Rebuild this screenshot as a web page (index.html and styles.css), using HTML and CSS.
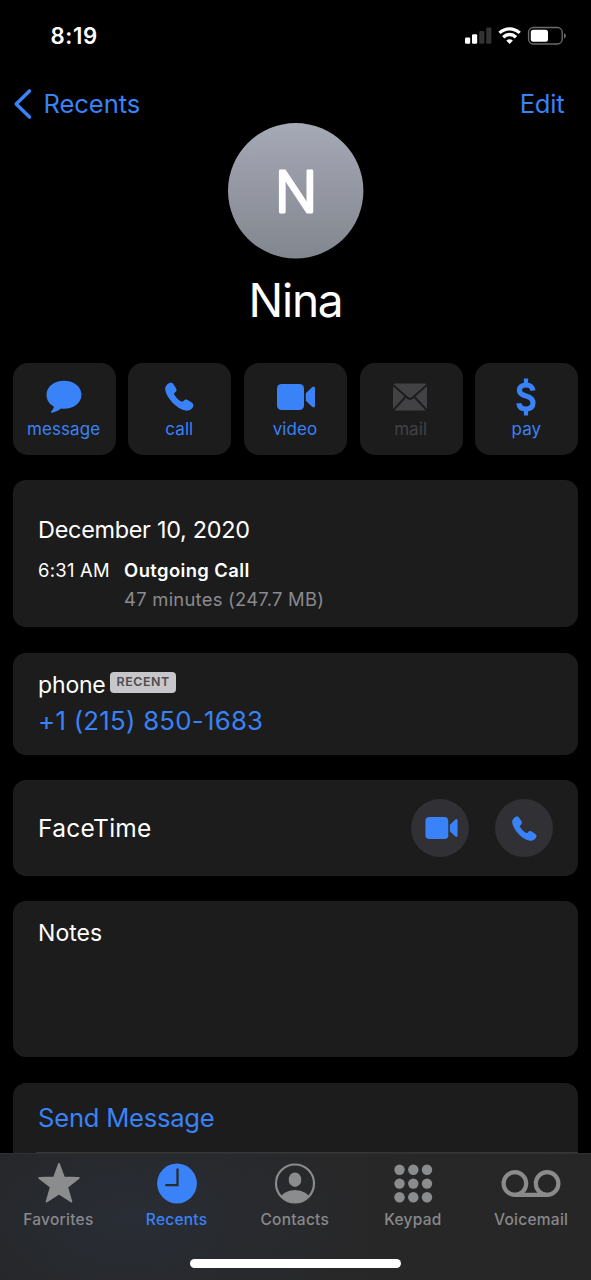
FILE: index.html
```html
<!DOCTYPE html>
<html lang="en">
<head>
<meta charset="utf-8">
<title>Nina</title>
<link rel="stylesheet" href="styles.css">
</head>
<body>
<svg class="defs" width="0" height="0" aria-hidden="true">
  <symbol id="phone" viewBox="0 0 29 29"><path d="M2.2 2.5C4 .3 7.200 0 8.500 2.200L11 6.200C12 8 11.600 9.400 9.900 10.600C8.900 11.300 8.900 12 9.500 13C11 15.600 13.200 17.800 15.800 19.300C16.800 19.900 17.600 19.900 18.300 19C19.600 17.300 21 17 22.700 18L26.700 20.600C28.900 22 29 24.200 27.200 26.200C25.600 28 23.500 28.900 21 28.600C16.500 28 11.500 25 7.300 20.500C3.200 16.100 .6 11.300 .2 7.300C0 5.300 .8 3.800 2.200 2.500Z"/></symbol>
  <symbol id="video" viewBox="0 0 38 26"><rect x="0" y="0" width="27" height="26" rx="4.500"/><path d="M28.800 9.200L34.800 3.500Q38 1 38 4.500V21.500Q38 25 34.800 22.500L28.800 16.800Z"/></symbol>
</svg>
<div class="screen">
  <header class="status">
    <span class="time">8:19</span>
    <svg class="status-icons" width="104" height="20" viewBox="0 0 104 20">
      <g fill="#fff"><rect x="2" y="11.500" width="5.200" height="6.300" rx="1.200"/><rect x="9" y="8.300" width="5.200" height="9.500" rx="1.200"/></g>
      <g fill="#333"><rect x="16.200" y="5" width="5.200" height="12.800" rx="1.200"/><rect x="23.200" y="1.500" width="5.200" height="16.300" rx="1.200"/></g>
      <g fill="none" stroke="#fff" stroke-width="3.300"><path d="M36.500 6.900C42.400 1.400 50.800 1.400 56.700 6.900"/><path d="M40.200 11.200C43.900 7.600 49.300 7.600 53 11.200"/></g>
      <path fill="#fff" d="M46.600 18L43.300 14.600Q46.600 12 49.900 14.600Z"/>
      <rect x="65.600" y="1.500" width="33.600" height="16.500" rx="4.800" fill="none" stroke="#6b6b6b" stroke-width="1.400"/>
      <rect x="67.800" y="3.800" width="17.200" height="12" rx="2.500" fill="#fff"/>
      <path fill="#6b6b6b" d="M101 7.200Q103 8 103 9.800Q103 11.600 101 12.400Z"/>
    </svg>
  </header>
  <nav class="nav">
    <span class="back">
      <svg width="20" height="32" viewBox="0 0 20 32"><path d="M16.500 2.900L3.200 16L16.500 29.100" fill="none" stroke="#3a82f7" stroke-width="3.500" stroke-linecap="round" stroke-linejoin="round"/></svg>
      <span class="back-label">Recents</span>
    </span>
    <span class="edit">Edit</span>
  </nav>
  <section class="profile">
    <svg class="avatar" width="136" height="136" viewBox="0 0 136 136">
      <defs><linearGradient id="av" x1="0" y1="0" x2="0" y2="1"><stop offset="0" stop-color="#a6a9b6"/><stop offset="1" stop-color="#82868e"/></linearGradient></defs>
      <circle cx="67.700" cy="67.800" r="67.700" fill="url(#av)"/>
      <text class="initial" x="68" y="89.400" text-anchor="middle">N</text>
    </svg>
    <h1 class="name">Nina</h1>
  </section>
  <section class="actions">
    <div class="action"><svg width="36" height="34" viewBox="0 0 36 34"><path d="M18 .8C27.800 .8 35.500 6.900 35.500 14.800S27.800 28.800 18 28.800C17 28.800 16 28.700 15.100 28.600C12.500 30.600 9.400 32.200 6.300 32.700C5.100 32.900 4.700 32 5.400 31.200C6.900 29.600 7.800 28.300 7.900 26.600C3.300 24.300 .5 20 .5 14.800C.5 6.900 8.200 .8 18 .8Z"/></svg><span>message</span></div>
    <div class="action"><svg width="29" height="29"><use href="#phone"/></svg><span>call</span></div>
    <div class="action video"><svg width="38" height="26"><use href="#video"/></svg><span>video</span></div>
    <div class="action off"><svg width="34" height="28" viewBox="0 0 34 28"><rect y=".5" width="34" height="27" rx="2.500"/><path d="M0 2L14.200 14.500Q17 17.400 19.800 14.500L34 2M0 27.500L12.500 14M34 27.500L21.500 14" fill="none" stroke="#1c1c1c" stroke-width="1.900"/></svg><span>mail</span></div>
    <div class="action"><svg width="20" height="38" viewBox="0 0 20 38"><path d="M10 .5V7M10 31V37.500" fill="none" stroke="#3a82f7" stroke-width="4.200"/><path d="M17 12.600C16.400 9 14 7 10.200 7C6.200 7 3.400 9 3.400 12.200C3.400 15.700 6 16.900 10 18C14.500 19.200 17 20.800 17 25C17 29 14.300 31 10 31C5.600 31 3.200 28.700 2.800 25.200" fill="none" stroke="#3a82f7" stroke-width="5.200"/></svg><span>pay</span></div>
  </section>
  <section class="card log">
    <div class="date">December 10, 2020</div>
    <div class="entry">
      <span class="at">6:31 AM</span>
      <div><div class="kind">Outgoing Call</div><div class="detail">47 minutes (247.7 MB)</div></div>
    </div>
  </section>
  <section class="card number">
    <div class="label"><span class="phone-label">phone</span><span class="badge">RECENT</span></div>
    <div class="tel">+1 (215) 850-1683</div>
  </section>
  <section class="card facetime">
    <span class="ft-label">FaceTime</span>
    <span class="round"><svg class="ft-video" width="33" height="22"><use href="#video"/></svg></span>
    <span class="round"><svg class="ft-phone" width="25" height="25"><use href="#phone"/></svg></span>
  </section>
  <section class="card notes"><span class="notes-label">Notes</span></section>
  <section class="card send"><div class="send-label">Send Message</div></section>
  <footer class="tabs">
    <div class="tab"><svg width="44" height="42" viewBox="0 0 44 42"><path d="M22 2L26.900 15.500L41.700 16L30.100 25L34.300 39.500L22 31.300L9.700 39.500L13.900 25L2.300 16L17.100 15.500Z" stroke="#8b8c8e" stroke-width="2" stroke-linejoin="round"/></svg><span>Favorites</span></div>
    <div class="tab on"><svg width="44" height="42" viewBox="0 0 44 42"><circle cx="22" cy="21.500" r="19.900"/><path d="M22.500 7.500V23.200H11.200" fill="none" stroke="#292c33" stroke-width="2.300" stroke-linecap="round"/></svg><span>Recents</span></div>
    <div class="tab"><svg width="44" height="42" viewBox="0 0 44 42"><clipPath id="cp"><circle cx="22" cy="21.500" r="19"/></clipPath><circle cx="22" cy="21.500" r="19" fill="none" stroke="#8b8b8b" stroke-width="2.200"/><ellipse cx="22" cy="17.700" rx="6.300" ry="7.200"/><ellipse cx="22" cy="37.500" rx="14.500" ry="9.500" clip-path="url(#cp)"/></svg><span>Contacts</span></div>
    <div class="tab"><svg width="44" height="42" viewBox="0 0 44 42"><circle cx="8.500" cy="7.800" r="5.200"/><circle cx="22.300" cy="7.800" r="5.200"/><circle cx="36" cy="7.800" r="5.200"/><circle cx="8.500" cy="21.600" r="5.200"/><circle cx="22.300" cy="21.600" r="5.200"/><circle cx="36" cy="21.600" r="5.200"/><circle cx="8.500" cy="35.300" r="5.200"/><circle cx="22.300" cy="35.300" r="5.200"/><circle cx="36" cy="35.300" r="5.200"/></svg><span>Keypad</span></div>
    <div class="tab"><svg width="60" height="42" viewBox="0 0 60 42"><g fill="none" stroke="#8b8b8b" stroke-width="4.200"><circle cx="13.900" cy="21.500" r="11.300"/><circle cx="46.100" cy="21.500" r="11.300"/><path d="M13.900 32.800H46.100"/></g></svg><span>Voicemail</span></div>
    <div class="home"></div>
  </footer>
</div>
</body>
</html>
```
FILE: styles.css
```css
* { box-sizing: border-box; }
body { margin: 0; background: #000; color: #fff; font-family: Inter, "Liberation Sans", sans-serif; }
.defs { position: absolute; }
svg { display: block; flex: none; }
span, .name, .date, .kind, .detail, .tel, .send-label { white-space: nowrap; }
.screen { width: 591px; height: 1280px; overflow: hidden; position: relative; }
.status { height: 71px; display: flex; justify-content: space-between; align-items: center; padding: 0 24px 0 50.500px; }
.time { font-size: 22.200px; font-weight: 600; letter-spacing: .6px; }
.nav { height: 52px; padding: 7px 26.500px 0 12.500px; display: flex; justify-content: space-between; align-items: flex-start; color: #3a82f7; font-size: 25.600px; line-height: 52px; }
.back { display: flex; align-items: center; gap: 11px; }
.back-label { letter-spacing: -.1px; }
.edit { letter-spacing: -.2px; }
.profile { height: 239.500px; display: flex; flex-direction: column; align-items: center; }
.initial { font-size: 55.500px; font-weight: 300; fill: #fff; stroke: #fff; stroke-width: 2.800px; stroke-linejoin: round; }
.name { margin: 11px 0 0; font-size: 46px; font-weight: 400; line-height: 60px; letter-spacing: -1.200px; }
.actions { display: grid; grid-template-columns: repeat(5, 1fr); gap: 12.600px; padding: 0 12.600px; }
.action { height: 92px; border-radius: 15px; background: #1c1c1c; display: grid; grid-template-rows: 38px 26px; padding-top: 15px; justify-items: center; align-items: center; fill: #3a82f7; color: #3a82f7; font-size: 17px; line-height: 26px; letter-spacing: .1px; }
.action svg { margin-left: -1px; }
.action span { margin-left: -1px; }
.action.video svg { margin-left: 2px; }
.action.off svg { margin-left: -2px; }
.action.off { fill: #424244; color: #424244; }
.card { margin: 25.500px 12.600px 0; background: #1c1c1c; border-radius: 13px; padding: 0 25.500px; }
.log { height: 147px; padding-top: 35px; }
.date { font-size: 23.400px; line-height: 30px; letter-spacing: -.28px; }
.entry { display: flex; font-size: 18.400px; line-height: 29.500px; padding-top: 10.500px; letter-spacing: .25px; }
.at { width: 86px; }
.kind { font-weight: 600; letter-spacing: .4px; }
.detail { color: #8a8a8f; }
.number { height: 102px; padding-top: 16px; }
.label { display: flex; height: 32px; }
.phone-label { font-size: 23px; line-height: 32px; width: 72px; letter-spacing: -.2px; }
.badge { height: 21px; margin-top: 3px; padding: 0 6.500px; border-radius: 4px; background: #c7c6cb; color: #4c4c4f; font-size: 12.400px; font-weight: 600; line-height: 20px; letter-spacing: .55px; }
.tel { color: #3a82f7; font-size: 25.800px; line-height: 40px; letter-spacing: .25px; }
.facetime { height: 95.500px; display: flex; align-items: center; gap: 25.500px; }
.ft-label { flex: 1; font-size: 24.500px; letter-spacing: .25px; }
.round { width: 58px; height: 58px; border-radius: 50%; background: #313034; display: grid; place-items: center; fill: #3a82f7; }
.ft-video { margin: 1px 0 0 3px; }
.ft-phone { margin: 1px 0 0 1px; }
.notes { height: 156px; padding-top: 16px; font-size: 23px; line-height: 32px; }
.send { height: 120px; padding-top: 15px; }
.send-label { font-size: 25.600px; line-height: 40px; letter-spacing: -.25px; color: #3a82f7; }
.send::after { content: ""; display: block; height: 1.500px; margin: 14px -25.500px 0 -2px; background: #363638; }
.tabs { position: absolute; left: 0; right: 0; bottom: 0; height: 127px; padding-top: 8px; display: grid; grid-template-columns: repeat(5, 118.200px); background: radial-gradient(ellipse 230px 130px at 130px 65px, #292d35, rgba(41,45,53,0)), linear-gradient(90deg, #242526, #282829 50%, #262627); border-top: 1px solid #303133; }
.tab { display: flex; flex-direction: column; align-items: center; gap: 5px; fill: #8b8c8e; color: #88898b; font-size: 15.500px; line-height: 22px; font-weight: 500; letter-spacing: .25px; }
.tab svg { margin-left: -1px; }
.tab span { margin-left: -1.400px; }
.tab.on { fill: #3a82f7; color: #3a82f7; }
.tab.on svg { margin-left: 0; }
.home { position: absolute; left: 190px; width: 211px; height: 8.500px; bottom: 12.500px; border-radius: 5px; background: #fff; }
```
